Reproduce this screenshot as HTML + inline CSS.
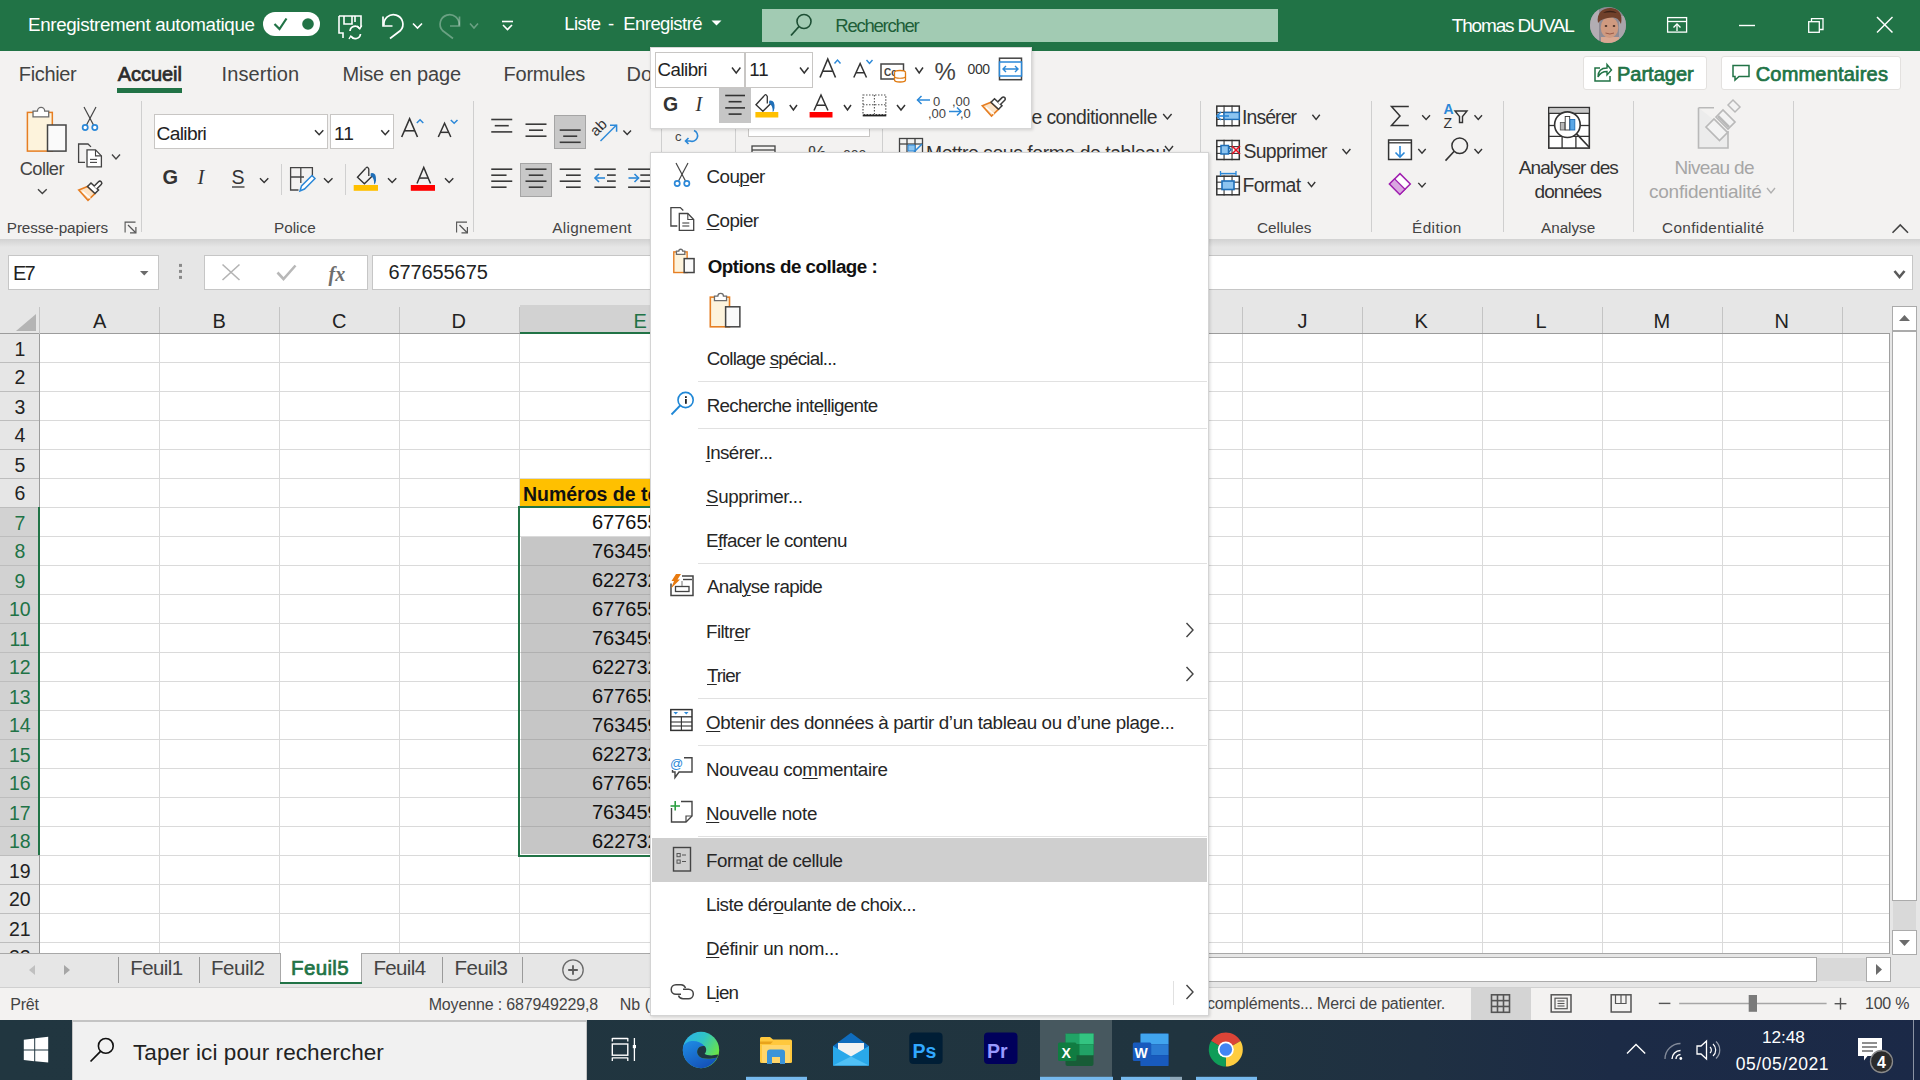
<!DOCTYPE html>
<html><head><meta charset="utf-8">
<style>
*{margin:0;padding:0;box-sizing:border-box}
html,body{width:1920px;height:1080px;overflow:hidden;background:#fff;font-family:"Liberation Sans",sans-serif;color:#222}
.a{position:absolute}
.t{position:absolute;white-space:nowrap;line-height:1}
.t u{text-decoration:underline;text-decoration-thickness:1px;text-underline-offset:2px}
svg{position:absolute;overflow:visible}
</style></head><body>

<!-- TITLE BAR -->
<div class="a" style="left:0;top:0;width:1920px;height:51px;background:#217346"></div>
<div class="a" style="left:263px;top:12px;width:57px;height:24px;background:#fff;border-radius:12px"></div>
<svg style="left:263px;top:12px" width="57" height="24"><polyline points="11.5,18 16.5,23 23.5,12.5" transform="translate(0,-6)" fill="none" stroke="#217346" stroke-width="2.2"/><circle cx="45" cy="12" r="5.8" fill="#217346"/></svg>
<div class="a" style="left:762px;top:9px;width:516px;height:33px;background:#a2cbb3"></div>

<!-- RIBBON -->
<div class="a" style="left:0;top:51px;width:1920px;height:188px;background:#f3f2f1"></div>
<div class="a" style="left:0;top:239px;width:1920px;height:8px;background:linear-gradient(#d2d2d2,#e6e6e6)"></div>
<div class="a" style="left:117px;top:88px;width:65px;height:5px;background:#217346"></div>
<div class="a" style="left:1583px;top:56px;width:124px;height:34px;background:#fff;border:1px solid #e3e1df;border-radius:3px"></div>
<div class="a" style="left:1721px;top:56px;width:180px;height:34px;background:#fff;border:1px solid #e3e1df;border-radius:3px"></div>
<!-- separators -->
<div class="a" style="left:141px;top:101px;width:1px;height:131px;background:#cfcfcf"></div>
<div class="a" style="left:473px;top:101px;width:1px;height:131px;background:#cfcfcf"></div>
<div class="a" style="left:661px;top:101px;width:1px;height:131px;background:#cfcfcf"></div>
<div class="a" style="left:735px;top:101px;width:1px;height:131px;background:#cfcfcf"></div>
<div class="a" style="left:882px;top:101px;width:1px;height:131px;background:#cfcfcf"></div>
<div class="a" style="left:1200px;top:101px;width:1px;height:131px;background:#cfcfcf"></div>
<div class="a" style="left:1371px;top:101px;width:1px;height:131px;background:#cfcfcf"></div>
<div class="a" style="left:1503px;top:101px;width:1px;height:131px;background:#cfcfcf"></div>
<div class="a" style="left:1633px;top:101px;width:1px;height:131px;background:#cfcfcf"></div>
<div class="a" style="left:1793px;top:101px;width:1px;height:131px;background:#cfcfcf"></div>
<!-- font boxes -->
<div class="a" style="left:154px;top:114px;width:174px;height:35px;background:#fff;border:1px solid #c8c6c4"></div>
<div class="a" style="left:330px;top:114px;width:64px;height:35px;background:#fff;border:1px solid #c8c6c4"></div>
<div class="a" style="left:748px;top:114px;width:122px;height:23px;background:#fff;border:1px solid #c8c6c4"></div>
<!-- highlighted align buttons -->
<div class="a" style="left:554px;top:115px;width:32px;height:34px;background:#c8c8c8;border:1px solid #a5a5a5"></div>
<div class="a" style="left:520px;top:163px;width:32px;height:34px;background:#c8c8c8;border:1px solid #a5a5a5"></div>
<svg style="left:0;top:0" width="1920" height="1080" viewBox="0 0 1920 1080"><path d="M339,16 H361 V27 M339,16 V33 H343 V38 M344,16 V24 H352 V16 M355,16 V22" fill="none" stroke="#fff" stroke-width="1.6" /><path d="M350,31 A5.2,5.2 0 0 1 359.5,28.5 M360.5,34 A5.2,5.2 0 0 1 351,36.3" fill="none" stroke="#fff" stroke-width="1.7" /><path d="M357,26 L359.8,28.8 L361.8,25.5 M353.5,38.5 L350.8,36 L349,39" fill="none" stroke="#fff" stroke-width="1.4" /><path d="M383,16.5 V26 H392.5" fill="none" stroke="#fff" stroke-width="1.7" /><path d="M384,25.5 A9.5,9.5 0 1 1 400.5,30.5 L390,38.5" fill="none" stroke="#fff" stroke-width="1.7" /><polyline points="413,23.5 417.5,28 422,23.5" fill="none" stroke="#fff" stroke-width="1.6"/><path d="M459.5,16.5 V26 H450" fill="none" stroke="rgba(255,255,255,0.33)" stroke-width="1.7" /><path d="M459,25.5 A9.5,9.5 0 1 0 442.5,30.5 L453,38.5" fill="none" stroke="rgba(255,255,255,0.33)" stroke-width="1.7" /><polyline points="470,23.5 474.0,28 478,23.5" fill="none" stroke="rgba(255,255,255,0.33)" stroke-width="1.6"/><line x1="502" y1="21.5" x2="513" y2="21.5" stroke="#fff" stroke-width="1.6"/><polyline points="503,25 507.5,29.5 512,25" fill="none" stroke="#fff" stroke-width="1.6"/><polygon points="711.5,20.5 721.5,20.5 716.5,25.5" fill="#fff"/><circle cx="804" cy="21.5" r="7" fill="none" stroke="#1d4f34" stroke-width="1.6"/><line x1="799" y1="26.5" x2="791" y2="35.5" stroke="#1d4f34" stroke-width="1.8"/><defs><clipPath id="av"><circle cx="1608" cy="25" r="18"/></clipPath></defs><g clip-path="url(#av)"><rect x="1590" y="7" width="36" height="36" fill="#8f8b94"/><rect x="1590" y="7" width="9" height="36" fill="#b2adb3"/><rect x="1619" y="16" width="7" height="24" fill="#a9a5ab"/><path d="M1601,37 H1619 V43 H1601 Z" fill="#d9a892"/><ellipse cx="1609.5" cy="27.5" rx="8.8" ry="10.5" fill="#cf9a80"/><path d="M1598,23 C1596,12 1604,7.5 1611,8 C1619,8.5 1623,14 1621,24 C1619,19 1616,17 1612,17.5 C1606,18 1601,19 1598,23 Z" fill="#70402a"/><path d="M1603,13 C1607,10 1613,10 1617,13 C1613,12 1608,12 1603,13 Z" fill="#3a2218"/><ellipse cx="1606" cy="26" rx="1.3" ry="0.9" fill="#4a3228"/><ellipse cx="1614" cy="26" rx="1.3" ry="0.9" fill="#4a3228"/><path d="M1605.5,33 Q1610,35 1614,33" stroke="#9a5a48" stroke-width="1" fill="none"/></g><rect x="1667.6" y="17.6" width="19" height="14.5" fill="none" stroke="#fff" stroke-width="1.3" /><line x1="1667.6" y1="21.5" x2="1686.6" y2="21.5" stroke="#fff" stroke-width="1.3"/><line x1="1677" y1="31" x2="1677" y2="24" stroke="#fff" stroke-width="1.3"/><polyline points="1673.5,27.5 1677.0,24 1680.5,27.5" fill="none" stroke="#fff" stroke-width="1.3"/><line x1="1739" y1="25.5" x2="1755" y2="25.5" stroke="#fff" stroke-width="1.4"/><rect x="1808.7" y="21.7" width="10.6" height="10.6" fill="none" stroke="#fff" stroke-width="1.3" /><path d="M1811.5,21.5 V18.6 H1823 V29.5 H1819.5" fill="none" stroke="#fff" stroke-width="1.3" /><line x1="1877" y1="17" x2="1892.5" y2="32.5" stroke="#fff" stroke-width="1.5"/><line x1="1892.5" y1="17" x2="1877" y2="32.5" stroke="#fff" stroke-width="1.5"/><path d="M1600,68 H1595 V81 H1610 V76" fill="none" stroke="#217346" stroke-width="1.5" /><path d="M1598,77 C1598,70 1602,68 1607,68 V64.5 L1611.5,70 L1607,75 V71.5 C1603,71.5 1600,73 1598,77 Z" fill="none" stroke="#217346" stroke-width="1.4" /><path d="M1733,65.5 H1749 V76.5 H1739 L1735,80 V76.5 H1733 Z" fill="none" stroke="#217346" stroke-width="1.5" /></svg>
<svg style="left:0;top:0" width="1920" height="1080" viewBox="0 0 1920 1080"><rect x="27.400000000000002" y="112.4" width="24.924000000000003" height="38.7" fill="#fdf3dc" stroke="#e67e22" stroke-width="1.5" /><path d="M33.032000000000004,116.9 V111.05 H37.454 A3.6180000000000003,3.6180000000000003 0 0 1 44.690000000000005,111.05 H48.71000000000001 V116.9 Z" fill="#fff" stroke="#6b6b6b" stroke-width="1.3" /><rect x="47.504000000000005" y="125.0" width="18.492" height="26.099999999999998" fill="#fafafa" stroke="#444" stroke-width="1.5" /><polyline points="38,189.3 42.35,193.6 46.7,189.3" fill="none" stroke="#444" stroke-width="1.4"/><line x1="84.0" y1="107" x2="93.5" y2="125.0" stroke="#444" stroke-width="1.2"/><line x1="96.0" y1="107" x2="86.5" y2="125.0" stroke="#444" stroke-width="1.2"/><circle cx="85.2" cy="127.5" r="2.6" fill="#fff" stroke="#2b88d8" stroke-width="1.7"/><circle cx="94.8" cy="127.5" r="2.6" fill="#fff" stroke="#2b88d8" stroke-width="1.7"/><path d="M85.0,162.4 H78.6 V144.0 H88.0 L91.0,146.9" fill="none" stroke="#444" stroke-width="1.3" /><path d="M87.0,149.9 H95.5 L101.4,155.9 V166.8 H87.0 Z" fill="#fff" stroke="#444" stroke-width="1.3" /><path d="M95.5,149.9 V155.9 H101.4" fill="none" stroke="#444" stroke-width="1.1" /><line x1="90.0" y1="159.4" x2="97.0" y2="159.4" stroke="#444" stroke-width="1.1"/><line x1="90.0" y1="162.4" x2="97.0" y2="162.4" stroke="#444" stroke-width="1.1"/><polyline points="112,154.5 116.0,159 120,154.5" fill="none" stroke="#444" stroke-width="1.4"/><path d="M78.8,190.0 L88.0,200.3 L95.0,193.5 L87.5,186.5 Z" fill="#fce3c6" stroke="#e67e22" stroke-width="1.7" /><line x1="82.5" y1="191.5" x2="90.5" y2="198.5" stroke="#fff" stroke-width="1.2"/><path d="M87.5,186.5 L91.0,183.0 L98.5,190.0 L95.0,193.5 Z" fill="#fff" stroke="#3c3c3c" stroke-width="1.5" /><path d="M94.0,186.3 L98.5,181.8 A1.9,1.9 0 0 1 101.2,184.5 L96.7,189.0" fill="#fff" stroke="#3c3c3c" stroke-width="1.5" /><path d="M125.1,232.5 V222.1 H135.5" fill="none" stroke="#555" stroke-width="1.1" /><line x1="128.0" y1="225.0" x2="135.5" y2="232.5" stroke="#555" stroke-width="1.2"/><path d="M130.0,232.9 H135.9 V227.0" fill="none" stroke="#555" stroke-width="1.2" /><polyline points="315,130.2 319.15,134.7 323.3,130.2" fill="none" stroke="#333" stroke-width="1.5"/><polyline points="381.3,130.2 385.25,134.7 389.2,130.2" fill="none" stroke="#333" stroke-width="1.5"/><path d="M401.7,137 L409.6,118.7 L417.5,137" fill="none" stroke="#333" stroke-width="1.6" stroke-linejoin="miter"/><line x1="404.386" y1="130.778" x2="414.814" y2="130.778" stroke="#333" stroke-width="1.6"/><polyline points="416.8,123 420.05,119.8 423.3,123" fill="none" stroke="#2b88d8" stroke-width="1.5"/><path d="M438.3,137 L444.55,123.3 L450.8,137" fill="none" stroke="#333" stroke-width="1.5" stroke-linejoin="miter"/><line x1="440.425" y1="132.34199999999998" x2="448.675" y2="132.34199999999998" stroke="#333" stroke-width="1.5"/><polyline points="450.8,120 454.15,123.3 457.5,120" fill="none" stroke="#2b88d8" stroke-width="1.5"/><text x="162.5" y="184.3" font-family="Liberation Sans" font-size="20" fill="#333" font-weight="bold" font-style="normal" text-anchor="start">G</text><text x="197.5" y="184.3" font-family="Liberation Serif" font-size="20.5" fill="#333" font-weight="normal" font-style="italic" text-anchor="start">I</text><text x="231.5" y="184.3" font-family="Liberation Sans" font-size="19.5" fill="#333" font-weight="normal" font-style="normal" text-anchor="start">S</text><line x1="232" y1="187" x2="244.5" y2="187" stroke="#333" stroke-width="1.3"/><polyline points="260,178.3 264.15,182.5 268.3,178.3" fill="none" stroke="#333" stroke-width="1.4"/><line x1="281.5" y1="164" x2="281.5" y2="195" stroke="#d0d0d0" stroke-width="1"/><path d="M298.5,190 H290.6 V167.6 H312.4 V176.5 M290.6,177 H304 M300.8,167.6 V183" fill="none" stroke="#444" stroke-width="1.3" /><path d="M300,191 L301.5,186 L312,175.5 L315,178.5 L304.5,189 Z" fill="#fff" stroke="#2b88d8" stroke-width="1.5" /><polyline points="324,178.3 328.25,182.5 332.5,178.3" fill="none" stroke="#333" stroke-width="1.4"/><line x1="345.5" y1="164" x2="345.5" y2="195" stroke="#d0d0d0" stroke-width="1"/><path d="M365.5,168.5 L357.5,177.3 L364.4,183.8 L372.8,175.5" fill="none" stroke="#333" stroke-width="1.4" /><path d="M365.5,168.5 Q367.3,165.5 368.8,169 V176" fill="none" stroke="#333" stroke-width="1.3" /><path d="M370.8,173.2 Q376.5,172 376,180.5 Q375.5,184 374.2,184.5 Q374.5,178 370.5,175.8 Z" fill="#1f6fb8" stroke="none" stroke-width="0" /><rect x="353.7" y="185" width="24.3" height="5.8" fill="#ffc000" stroke="none" stroke-width="0" /><polyline points="388,178.3 392.15,182.5 396.3,178.3" fill="none" stroke="#333" stroke-width="1.4"/><path d="M417,183.5 L423.75,167.5 L430.5,183.5" fill="none" stroke="#333" stroke-width="1.5" stroke-linejoin="miter"/><line x1="419.295" y1="178.06" x2="428.205" y2="178.06" stroke="#333" stroke-width="1.5"/><rect x="410.8" y="185" width="24.2" height="5.8" fill="#ff0000" stroke="none" stroke-width="0" /><polyline points="445,178.3 449.15,182.5 453.3,178.3" fill="none" stroke="#333" stroke-width="1.4"/><path d="M456.6,232.5 V222.1 H467" fill="none" stroke="#555" stroke-width="1.1" /><line x1="459.5" y1="225.0" x2="467" y2="232.5" stroke="#555" stroke-width="1.2"/><path d="M461.5,232.9 H467.4 V227.0" fill="none" stroke="#555" stroke-width="1.2" /><line x1="491.25" y1="119.5" x2="512.25" y2="119.5" stroke="#3a3a3a" stroke-width="1.6"/><line x1="494.75" y1="125.7" x2="508.75" y2="125.7" stroke="#3a3a3a" stroke-width="1.6"/><line x1="491.25" y1="131.9" x2="512.25" y2="131.9" stroke="#3a3a3a" stroke-width="1.6"/><line x1="525.5" y1="124.2" x2="546.5" y2="124.2" stroke="#3a3a3a" stroke-width="1.6"/><line x1="529.0" y1="130.2" x2="543.0" y2="130.2" stroke="#3a3a3a" stroke-width="1.6"/><line x1="525.5" y1="136.2" x2="546.5" y2="136.2" stroke="#3a3a3a" stroke-width="1.6"/><line x1="559.7" y1="130.1" x2="580.7" y2="130.1" stroke="#3a3a3a" stroke-width="1.6"/><line x1="563.2" y1="136.2" x2="577.2" y2="136.2" stroke="#3a3a3a" stroke-width="1.6"/><line x1="559.7" y1="142.29999999999998" x2="580.7" y2="142.29999999999998" stroke="#3a3a3a" stroke-width="1.6"/><text x="0" y="0" font-family="Liberation Sans" font-size="15" fill="#333" transform="translate(596,137) rotate(-45)">ab</text><line x1="600.5" y1="141" x2="616.5" y2="125" stroke="#2b88d8" stroke-width="1.5"/><path d="M610,125.2 H616.6 V131.8" fill="none" stroke="#2b88d8" stroke-width="1.5" /><polyline points="623.4,130.5 627.2,134.5 631,130.5" fill="none" stroke="#333" stroke-width="1.4"/><line x1="491.25" y1="169.2" x2="512.25" y2="169.2" stroke="#3a3a3a" stroke-width="1.6"/><line x1="491.25" y1="175.2" x2="506.55" y2="175.2" stroke="#3a3a3a" stroke-width="1.6"/><line x1="491.25" y1="181.2" x2="512.25" y2="181.2" stroke="#3a3a3a" stroke-width="1.6"/><line x1="491.25" y1="187.2" x2="506.55" y2="187.2" stroke="#3a3a3a" stroke-width="1.6"/><line x1="525.5" y1="169.2" x2="546.5" y2="169.2" stroke="#3a3a3a" stroke-width="1.6"/><line x1="528.75" y1="175.2" x2="543.25" y2="175.2" stroke="#3a3a3a" stroke-width="1.6"/><line x1="525.5" y1="181.2" x2="546.5" y2="181.2" stroke="#3a3a3a" stroke-width="1.6"/><line x1="528.75" y1="187.2" x2="543.25" y2="187.2" stroke="#3a3a3a" stroke-width="1.6"/><line x1="559.7" y1="169.2" x2="580.7" y2="169.2" stroke="#3a3a3a" stroke-width="1.6"/><line x1="566.0" y1="175.2" x2="580.7" y2="175.2" stroke="#3a3a3a" stroke-width="1.6"/><line x1="559.7" y1="181.2" x2="580.7" y2="181.2" stroke="#3a3a3a" stroke-width="1.6"/><line x1="566.0" y1="187.2" x2="580.7" y2="187.2" stroke="#3a3a3a" stroke-width="1.6"/><line x1="594.4" y1="169.2" x2="615.75" y2="169.2" stroke="#3a3a3a" stroke-width="1.6"/><line x1="607" y1="175.1" x2="615.75" y2="175.1" stroke="#3a3a3a" stroke-width="1.6"/><line x1="607" y1="181.1" x2="615.75" y2="181.1" stroke="#3a3a3a" stroke-width="1.6"/><line x1="594.4" y1="187.2" x2="615.75" y2="187.2" stroke="#3a3a3a" stroke-width="1.6"/><line x1="595" y1="178" x2="605" y2="178" stroke="#2b88d8" stroke-width="1.6"/><path d="M599,174 L595,178 L599,182" fill="none" stroke="#2b88d8" stroke-width="1.6" /><line x1="628.1" y1="169.2" x2="651" y2="169.2" stroke="#3a3a3a" stroke-width="1.6"/><line x1="640.3" y1="175.1" x2="651" y2="175.1" stroke="#3a3a3a" stroke-width="1.6"/><line x1="640.3" y1="181.1" x2="651" y2="181.1" stroke="#3a3a3a" stroke-width="1.6"/><line x1="628.1" y1="187.2" x2="651" y2="187.2" stroke="#3a3a3a" stroke-width="1.6"/><line x1="628.5" y1="178" x2="638.5" y2="178" stroke="#2b88d8" stroke-width="1.6"/><path d="M634.5,174 L638.5,178 L634.5,182" fill="none" stroke="#2b88d8" stroke-width="1.6" /><text x="675" y="128.5" font-family="Liberation Sans" font-size="12" fill="#444" font-weight="normal" font-style="normal" text-anchor="start">ab</text><text x="675" y="140.5" font-family="Liberation Sans" font-size="13" fill="#444" font-weight="normal" font-style="normal" text-anchor="start">c</text><path d="M694,130.5 A5.5,5.5 0 0 1 690,141 H685.5 M688.5,138 L685.5,141 L688.5,144" fill="none" stroke="#2b88d8" stroke-width="1.6" /><rect x="752" y="146" width="23" height="10" fill="none" stroke="#444" stroke-width="1.3" /><line x1="752" y1="150" x2="775" y2="150" stroke="#444" stroke-width="1.3"/><text x="808" y="160" font-family="Liberation Sans" font-size="21" fill="#444" font-weight="normal" font-style="normal" text-anchor="start">%</text><text x="843" y="160" font-family="Liberation Sans" font-size="14" fill="#444" font-weight="normal" font-style="normal" text-anchor="start">000</text><polyline points="1163.2,114 1167.4,119 1171.6,114" fill="none" stroke="#333" stroke-width="1.4"/><rect x="899.5" y="138.5" width="23" height="16" fill="none" stroke="#444" stroke-width="1.3" /><line x1="899.5" y1="144" x2="922.5" y2="144" stroke="#444" stroke-width="1.3"/><line x1="907" y1="138.5" x2="907" y2="155" stroke="#444" stroke-width="1.3"/><line x1="915" y1="138.5" x2="915" y2="155" stroke="#444" stroke-width="1.3"/><path d="M908,145 h7 v6 h-7z" fill="#8cc4f0" stroke="#2b88d8" stroke-width="1" /><path d="M914,152 L922,144" fill="none" stroke="#2b88d8" stroke-width="1.6" /><polyline points="1165,146 1169.0,151 1173,146" fill="none" stroke="#333" stroke-width="1.4"/><rect x="1216.8" y="106.10000000000001" width="22.5" height="19.6" fill="#fff" stroke="#333" stroke-width="1.5" /><line x1="1224.0666666666666" y1="105.4" x2="1224.0666666666666" y2="126.4" stroke="#333" stroke-width="1.1"/><line x1="1216.1" y1="112.4" x2="1240.0" y2="112.4" stroke="#333" stroke-width="1.1"/><line x1="1232.0333333333333" y1="105.4" x2="1232.0333333333333" y2="126.4" stroke="#333" stroke-width="1.1"/><line x1="1216.1" y1="119.4" x2="1240.0" y2="119.4" stroke="#333" stroke-width="1.1"/><rect x="1224" y="112.4" width="15.3" height="7" fill="#8cc4f0" stroke="#1f6fb8" stroke-width="1.4" /><line x1="1217" y1="116" x2="1229" y2="116" stroke="#2b88d8" stroke-width="1.6"/><path d="M1221,112 L1217,116 L1221,120" fill="none" stroke="#2b88d8" stroke-width="1.6" /><polyline points="1312.4,114.8 1316.1,119.4 1319.8,114.8" fill="none" stroke="#333" stroke-width="1.4"/><rect x="1216.8" y="140.5" width="22.5" height="19.0" fill="#fff" stroke="#333" stroke-width="1.5" /><line x1="1224.0666666666666" y1="139.8" x2="1224.0666666666666" y2="160.20000000000002" stroke="#333" stroke-width="1.1"/><line x1="1216.1" y1="146.60000000000002" x2="1240.0" y2="146.60000000000002" stroke="#333" stroke-width="1.1"/><line x1="1232.0333333333333" y1="139.8" x2="1232.0333333333333" y2="160.20000000000002" stroke="#333" stroke-width="1.1"/><line x1="1216.1" y1="153.4" x2="1240.0" y2="153.4" stroke="#333" stroke-width="1.1"/><rect x="1221" y="145.5" width="7.5" height="8.5" fill="#8cc4f0" stroke="#1f6fb8" stroke-width="1.5" /><path d="M1228.5,147 L1231,149.7 L1228.5,152.5" fill="none" stroke="#1f6fb8" stroke-width="1.4" /><line x1="1232" y1="146" x2="1240" y2="154" stroke="#e81123" stroke-width="1.6"/><line x1="1240" y1="146" x2="1232" y2="154" stroke="#e81123" stroke-width="1.6"/><polyline points="1342.5,149 1346.45,153.7 1350.4,149" fill="none" stroke="#333" stroke-width="1.4"/><rect x="1216.8" y="176.2" width="22.5" height="18.6" fill="#fff" stroke="#333" stroke-width="1.5" /><line x1="1224.0666666666666" y1="175.5" x2="1224.0666666666666" y2="195.5" stroke="#333" stroke-width="1.1"/><line x1="1216.1" y1="182.16666666666666" x2="1240.0" y2="182.16666666666666" stroke="#333" stroke-width="1.1"/><line x1="1232.0333333333333" y1="175.5" x2="1232.0333333333333" y2="195.5" stroke="#333" stroke-width="1.1"/><line x1="1216.1" y1="188.83333333333334" x2="1240.0" y2="188.83333333333334" stroke="#333" stroke-width="1.1"/><rect x="1222" y="181" width="12" height="8.5" fill="#8cc4f0" stroke="#1f6fb8" stroke-width="1.6" /><line x1="1220.5" y1="173.6" x2="1236" y2="173.6" stroke="#2b88d8" stroke-width="1.5"/><line x1="1220.5" y1="171" x2="1220.5" y2="176" stroke="#2b88d8" stroke-width="1.3"/><line x1="1236" y1="171" x2="1236" y2="176" stroke="#2b88d8" stroke-width="1.3"/><polyline points="1307.8,182 1311.5,186.6 1315.2,182" fill="none" stroke="#333" stroke-width="1.4"/><path d="M1408.8,106.5 H1391.5 L1400,116 L1391.5,125.5 H1408.8" fill="none" stroke="#333" stroke-width="1.5" /><polyline points="1422.2,115.3 1426.1,119.4 1430,115.3" fill="none" stroke="#333" stroke-width="1.4"/><text x="1443.6" y="114.4" font-family="Liberation Sans" font-size="14" fill="#2b88d8" font-weight="bold" font-style="normal" text-anchor="start">A</text><text x="1443.6" y="127.8" font-family="Liberation Sans" font-size="14" fill="#333" font-weight="normal" font-style="normal" text-anchor="start">Z</text><path d="M1455,111 H1467 L1462.5,116.5 V122.5 H1459.5 V116.5 Z" fill="none" stroke="#333" stroke-width="1.4" /><polyline points="1474.5,115.3 1478.25,119.4 1482,115.3" fill="none" stroke="#333" stroke-width="1.4"/><rect x="1388.6" y="140" width="22.8" height="19.5" fill="#fff" stroke="#333" stroke-width="1.5" /><line x1="1388.6" y1="142.8" x2="1411.4" y2="142.8" stroke="#333" stroke-width="1.3"/><line x1="1400" y1="146" x2="1400" y2="157" stroke="#2b88d8" stroke-width="1.6"/><path d="M1395.5,152.5 L1400,157 L1404.5,152.5" fill="none" stroke="#2b88d8" stroke-width="1.6" /><polyline points="1418.3,149 1422.0,153.2 1425.7,149" fill="none" stroke="#333" stroke-width="1.4"/><circle cx="1459.7" cy="145.8" r="7.8" fill="none" stroke="#333" stroke-width="1.5"/><line x1="1454.2" y1="151.3" x2="1445.5" y2="160.6" stroke="#333" stroke-width="1.6"/><polyline points="1474.5,149 1478.25,153.2 1482,149" fill="none" stroke="#333" stroke-width="1.4"/><path d="M1389.5,184 L1400,173.6 L1410.3,184 L1399.8,194.4 Z" fill="#fff" stroke="#a020b0" stroke-width="1.5" /><path d="M1389.5,184 L1394.6,178.9 L1405,189.3 L1399.8,194.4 Z" fill="#d9a6e0" stroke="#a020b0" stroke-width="1.3" /><polyline points="1418.3,182.9 1422.0,187 1425.7,182.9" fill="none" stroke="#333" stroke-width="1.4"/><rect x="1548.8" y="107.6" width="40.5" height="40.5" fill="#fff" stroke="#333" stroke-width="1.6" /><rect x="1549.5" y="108.3" width="39" height="5" fill="#c8c8c8" stroke="none" stroke-width="0" /><line x1="1548.8" y1="113.3" x2="1589.3" y2="113.3" stroke="#333" stroke-width="1.3"/><line x1="1548.8" y1="125.5" x2="1555" y2="125.5" stroke="#333" stroke-width="1.3"/><line x1="1580" y1="125.5" x2="1589.3" y2="125.5" stroke="#333" stroke-width="1.3"/><line x1="1548.8" y1="136.3" x2="1589.3" y2="136.3" stroke="#333" stroke-width="1.3"/><line x1="1562.1" y1="136.3" x2="1562.1" y2="148" stroke="#333" stroke-width="1.3"/><line x1="1575.9" y1="136.3" x2="1575.9" y2="148" stroke="#333" stroke-width="1.3"/><circle cx="1567.4" cy="124.7" r="12.8" fill="#fff" stroke="#333" stroke-width="1.6"/><line x1="1576.6" y1="133.9" x2="1589" y2="147" stroke="#333" stroke-width="1.7"/><rect x="1560.3" y="122.5" width="4.5" height="7.5" fill="#b8b8b8" stroke="#555" stroke-width="0.8" /><rect x="1565.2" y="116.5" width="4.5" height="13.5" fill="#fff" stroke="#333" stroke-width="0.9" /><rect x="1570" y="119.5" width="4.8" height="10.5" fill="#5aa7e6" stroke="#1f6fb8" stroke-width="0.9" /><path d="M1698.5,107.7 H1714 M1728,131 V148 H1698.5 V107.7" fill="#ececec" stroke="#b9b9b9" stroke-width="1.6" /><path d="M1706,127 L1714,119 L1727.5,132.5 L1719.5,140.5 Z" fill="#f3f3f3" stroke="#b9b9b9" stroke-width="1.7" /><path d="M1716,117 L1723,110 L1735,122 L1728,129 Z" fill="#f3f3f3" stroke="#b9b9b9" stroke-width="1.7" /><path d="M1728,105 L1733,100 L1740,107 L1735,112 Z" fill="#f3f3f3" stroke="#b9b9b9" stroke-width="1.5" /><line x1="1718" y1="116" x2="1729" y2="127" stroke="#b9b9b9" stroke-width="2.5"/><polyline points="1767,188 1771.0,193 1775,188" fill="none" stroke="#b0b0b0" stroke-width="1.4"/><polyline points="1892.5,232.8 1900.25,225 1908,232.8" fill="none" stroke="#444" stroke-width="1.6"/></svg>

<!-- FORMULA BAR AREA -->
<div class="a" style="left:0;top:247px;width:1920px;height:58px;background:#e6e6e6"></div>
<div class="a" style="left:1890px;top:305px;width:30px;height:682px;background:#e6e6e6"></div>
<div class="a" style="left:8px;top:255px;width:151px;height:35px;background:#fff;border:1px solid #c6c6c6"></div>
<div class="a" style="left:204px;top:255px;width:164px;height:35px;background:#fff;border:1px solid #c6c6c6"></div>
<div class="a" style="left:372px;top:255px;width:1541px;height:35px;background:#fff;border:1px solid #c6c6c6"></div>
<svg style="left:0;top:0" width="1920" height="1080" viewBox="0 0 1920 1080"><polygon points="140,271 148.5,271 144.25,275.5" fill="#6b6b6b"/><rect x="179" y="263.9" width="3" height="3" fill="#8a8a8a" stroke="none" stroke-width="0" /><rect x="179" y="269.9" width="3" height="3" fill="#8a8a8a" stroke="none" stroke-width="0" /><rect x="179" y="275.9" width="3" height="3" fill="#8a8a8a" stroke="none" stroke-width="0" /><line x1="222.5" y1="264.5" x2="239.5" y2="280" stroke="#b3b3b3" stroke-width="1.6"/><line x1="239.5" y1="264.5" x2="222.5" y2="280" stroke="#b3b3b3" stroke-width="1.6"/><path d="M277.5,272.5 L283.5,279 L295.5,265.5" fill="none" stroke="#b8b8b8" stroke-width="2.6" /><text x="328.5" y="281" font-family="Liberation Serif" font-size="20" fill="#6e6e6e" font-weight="bold" font-style="italic" text-anchor="start">fx</text><polyline points="1894.5,271 1899.5,277 1904.5,271" fill="none" stroke="#5a5a5a" stroke-width="2.6"/></svg>

<!-- GRID -->
<div class="a" style="left:0;top:305px;width:1890px;height:29px;background:#e6e6e6"></div>
<div class="a" style="left:0;top:334px;width:39px;height:619px;background:#e6e6e6"></div>
<div class="a" style="left:520px;top:305px;width:242px;height:29px;background:#d2d2d2"></div>
<div class="a" style="left:520px;top:332px;width:242px;height:2px;background:#217346"></div>
<div class="a" style="left:0;top:333px;width:520px;height:1px;background:#9c9c9c"></div>
<div class="a" style="left:762px;top:333px;width:1128px;height:1px;background:#9c9c9c"></div>
<svg style="left:0;top:305px" width="40" height="29"><polygon points="36,9 36,26 16,26" fill="#b4b4b4"/></svg>
<div class="a" style="left:0;top:507px;width:38px;height:348px;background:#d2d2d2"></div>
<div class="a" style="left:40px;top:334px;width:1849px;height:619px;background:#fff"></div>
<div class="a" style="left:0;top:362px;width:40px;height:1px;background:#bdbdbd"></div>
<div class="a" style="left:40px;top:362px;width:1849px;height:1px;background:#dadada"></div>
<div class="a" style="left:0;top:391px;width:40px;height:1px;background:#bdbdbd"></div>
<div class="a" style="left:40px;top:391px;width:1849px;height:1px;background:#dadada"></div>
<div class="a" style="left:0;top:420px;width:40px;height:1px;background:#bdbdbd"></div>
<div class="a" style="left:40px;top:420px;width:1849px;height:1px;background:#dadada"></div>
<div class="a" style="left:0;top:449px;width:40px;height:1px;background:#bdbdbd"></div>
<div class="a" style="left:40px;top:449px;width:1849px;height:1px;background:#dadada"></div>
<div class="a" style="left:0;top:478px;width:40px;height:1px;background:#bdbdbd"></div>
<div class="a" style="left:40px;top:478px;width:1849px;height:1px;background:#dadada"></div>
<div class="a" style="left:0;top:507px;width:40px;height:1px;background:#bdbdbd"></div>
<div class="a" style="left:40px;top:507px;width:1849px;height:1px;background:#dadada"></div>
<div class="a" style="left:0;top:536px;width:40px;height:1px;background:#bdbdbd"></div>
<div class="a" style="left:40px;top:536px;width:1849px;height:1px;background:#dadada"></div>
<div class="a" style="left:0;top:565px;width:40px;height:1px;background:#bdbdbd"></div>
<div class="a" style="left:40px;top:565px;width:1849px;height:1px;background:#dadada"></div>
<div class="a" style="left:0;top:594px;width:40px;height:1px;background:#bdbdbd"></div>
<div class="a" style="left:40px;top:594px;width:1849px;height:1px;background:#dadada"></div>
<div class="a" style="left:0;top:623px;width:40px;height:1px;background:#bdbdbd"></div>
<div class="a" style="left:40px;top:623px;width:1849px;height:1px;background:#dadada"></div>
<div class="a" style="left:0;top:652px;width:40px;height:1px;background:#bdbdbd"></div>
<div class="a" style="left:40px;top:652px;width:1849px;height:1px;background:#dadada"></div>
<div class="a" style="left:0;top:681px;width:40px;height:1px;background:#bdbdbd"></div>
<div class="a" style="left:40px;top:681px;width:1849px;height:1px;background:#dadada"></div>
<div class="a" style="left:0;top:710px;width:40px;height:1px;background:#bdbdbd"></div>
<div class="a" style="left:40px;top:710px;width:1849px;height:1px;background:#dadada"></div>
<div class="a" style="left:0;top:739px;width:40px;height:1px;background:#bdbdbd"></div>
<div class="a" style="left:40px;top:739px;width:1849px;height:1px;background:#dadada"></div>
<div class="a" style="left:0;top:768px;width:40px;height:1px;background:#bdbdbd"></div>
<div class="a" style="left:40px;top:768px;width:1849px;height:1px;background:#dadada"></div>
<div class="a" style="left:0;top:797px;width:40px;height:1px;background:#bdbdbd"></div>
<div class="a" style="left:40px;top:797px;width:1849px;height:1px;background:#dadada"></div>
<div class="a" style="left:0;top:826px;width:40px;height:1px;background:#bdbdbd"></div>
<div class="a" style="left:40px;top:826px;width:1849px;height:1px;background:#dadada"></div>
<div class="a" style="left:0;top:855px;width:40px;height:1px;background:#bdbdbd"></div>
<div class="a" style="left:40px;top:855px;width:1849px;height:1px;background:#dadada"></div>
<div class="a" style="left:0;top:884px;width:40px;height:1px;background:#bdbdbd"></div>
<div class="a" style="left:40px;top:884px;width:1849px;height:1px;background:#dadada"></div>
<div class="a" style="left:0;top:913px;width:40px;height:1px;background:#bdbdbd"></div>
<div class="a" style="left:40px;top:913px;width:1849px;height:1px;background:#dadada"></div>
<div class="a" style="left:0;top:942px;width:40px;height:1px;background:#bdbdbd"></div>
<div class="a" style="left:40px;top:942px;width:1849px;height:1px;background:#dadada"></div>
<div class="a" style="left:159px;top:307px;width:1px;height:26px;background:#c4c4c4"></div>
<div class="a" style="left:159px;top:334px;width:1px;height:619px;background:#dadada"></div>
<div class="a" style="left:279px;top:307px;width:1px;height:26px;background:#c4c4c4"></div>
<div class="a" style="left:279px;top:334px;width:1px;height:619px;background:#dadada"></div>
<div class="a" style="left:399px;top:307px;width:1px;height:26px;background:#c4c4c4"></div>
<div class="a" style="left:399px;top:334px;width:1px;height:619px;background:#dadada"></div>
<div class="a" style="left:519px;top:307px;width:1px;height:26px;background:#c4c4c4"></div>
<div class="a" style="left:519px;top:334px;width:1px;height:619px;background:#dadada"></div>
<div class="a" style="left:762px;top:307px;width:1px;height:26px;background:#c4c4c4"></div>
<div class="a" style="left:762px;top:334px;width:1px;height:619px;background:#dadada"></div>
<div class="a" style="left:882px;top:307px;width:1px;height:26px;background:#c4c4c4"></div>
<div class="a" style="left:882px;top:334px;width:1px;height:619px;background:#dadada"></div>
<div class="a" style="left:1002px;top:307px;width:1px;height:26px;background:#c4c4c4"></div>
<div class="a" style="left:1002px;top:334px;width:1px;height:619px;background:#dadada"></div>
<div class="a" style="left:1122px;top:307px;width:1px;height:26px;background:#c4c4c4"></div>
<div class="a" style="left:1122px;top:334px;width:1px;height:619px;background:#dadada"></div>
<div class="a" style="left:1242px;top:307px;width:1px;height:26px;background:#c4c4c4"></div>
<div class="a" style="left:1242px;top:334px;width:1px;height:619px;background:#dadada"></div>
<div class="a" style="left:1362px;top:307px;width:1px;height:26px;background:#c4c4c4"></div>
<div class="a" style="left:1362px;top:334px;width:1px;height:619px;background:#dadada"></div>
<div class="a" style="left:1482px;top:307px;width:1px;height:26px;background:#c4c4c4"></div>
<div class="a" style="left:1482px;top:334px;width:1px;height:619px;background:#dadada"></div>
<div class="a" style="left:1602px;top:307px;width:1px;height:26px;background:#c4c4c4"></div>
<div class="a" style="left:1602px;top:334px;width:1px;height:619px;background:#dadada"></div>
<div class="a" style="left:1722px;top:307px;width:1px;height:26px;background:#c4c4c4"></div>
<div class="a" style="left:1722px;top:334px;width:1px;height:619px;background:#dadada"></div>
<div class="a" style="left:1842px;top:307px;width:1px;height:26px;background:#c4c4c4"></div>
<div class="a" style="left:1842px;top:334px;width:1px;height:619px;background:#dadada"></div>
<div class="a" style="left:39px;top:334px;width:1px;height:619px;background:#9c9c9c"></div>
<div class="a" style="left:39px;top:307px;width:1px;height:27px;background:#c4c4c4"></div>
<div class="a" style="left:1889px;top:334px;width:1px;height:620px;background:#a0a0a0"></div>
<div class="a" style="left:520px;top:479px;width:242px;height:28px;background:#ffc000"></div>
<div class="a" style="left:521px;top:537px;width:241px;height:317px;background:#c6c6c6"></div>
<div class="a" style="left:521px;top:565px;width:241px;height:1px;background:#b0b0b0"></div>
<div class="a" style="left:521px;top:594px;width:241px;height:1px;background:#b0b0b0"></div>
<div class="a" style="left:521px;top:623px;width:241px;height:1px;background:#b0b0b0"></div>
<div class="a" style="left:521px;top:652px;width:241px;height:1px;background:#b0b0b0"></div>
<div class="a" style="left:521px;top:681px;width:241px;height:1px;background:#b0b0b0"></div>
<div class="a" style="left:521px;top:710px;width:241px;height:1px;background:#b0b0b0"></div>
<div class="a" style="left:521px;top:739px;width:241px;height:1px;background:#b0b0b0"></div>
<div class="a" style="left:521px;top:768px;width:241px;height:1px;background:#b0b0b0"></div>
<div class="a" style="left:521px;top:797px;width:241px;height:1px;background:#b0b0b0"></div>
<div class="a" style="left:521px;top:826px;width:241px;height:1px;background:#b0b0b0"></div>
<div class="a" style="left:518px;top:506px;width:250px;height:2px;background:#217346"></div>
<div class="a" style="left:518px;top:506px;width:2px;height:351px;background:#217346"></div>
<div class="a" style="left:518px;top:855px;width:250px;height:2px;background:#217346"></div>
<div class="a" style="left:38px;top:507px;width:2px;height:348px;background:#217346"></div>
<div class="a" style="left:0;top:943px;width:39px;height:10px;overflow:hidden"><div class="t" style="left:9px;top:4.9px;font-size:19.5px;color:#222;letter-spacing:0px">22</div></div>

<!-- SCROLLBARS -->
<div class="a" style="left:1892px;top:306px;width:25px;height:25px;background:#fff;border:1px solid #ababab"></div>
<div class="a" style="left:1892px;top:331px;width:25px;height:570px;background:#fff;border:1px solid #ababab"></div>
<div class="a" style="left:1893px;top:901px;width:23px;height:30px;background:#d9d9d9"></div>
<div class="a" style="left:1892px;top:930px;width:25px;height:25px;background:#fff;border:1px solid #ababab"></div>
<svg style="left:1892px;top:306px" width="25" height="25"><polygon points="7,15 18,15 12.5,9" fill="#6b6b6b"/></svg>
<svg style="left:1892px;top:930px" width="25" height="25"><polygon points="7,10 18,10 12.5,16" fill="#6b6b6b"/></svg>

<!-- SHEET TABS -->
<div class="a" style="left:0;top:953px;width:1890px;height:34px;background:#e6e6e6"></div>
<div class="a" style="left:0;top:953px;width:1890px;height:1px;background:#a8a8a8"></div>
<div class="a" style="left:280px;top:953px;width:82px;height:31px;background:#fff;border-left:1px solid #a8a8a8;border-right:1px solid #a8a8a8"></div>
<div class="a" style="left:280px;top:982px;width:82px;height:2px;background:#217346"></div>
<div class="a" style="left:118px;top:957px;width:1px;height:26px;background:#9a9a9a"></div>
<div class="a" style="left:199px;top:957px;width:1px;height:26px;background:#9a9a9a"></div>
<div class="a" style="left:442px;top:957px;width:1px;height:26px;background:#9a9a9a"></div>
<div class="a" style="left:522px;top:957px;width:1px;height:26px;background:#9a9a9a"></div>
<svg style="left:0;top:953px" width="100" height="34"><polygon points="35,12 35,22 29,17" fill="#c0c0c0"/><polygon points="64,12 64,22 70,17" fill="#a6a6a6"/></svg>
<svg style="left:562px;top:959px" width="22" height="22"><circle cx="11" cy="11" r="10.2" fill="none" stroke="#6a6a6a" stroke-width="1.3"/><path d="M11 6.2V15.8M6.2 11H15.8" stroke="#5a5a5a" stroke-width="1.8"/></svg>
<!-- horizontal scrollbar -->
<div class="a" style="left:660px;top:957px;width:1157px;height:25px;background:#fff;border:1px solid #ababab"></div>
<div class="a" style="left:1817px;top:958px;width:50px;height:23px;background:#d9d9d9"></div>
<div class="a" style="left:1866px;top:957px;width:25px;height:25px;background:#fff;border:1px solid #ababab"></div>
<svg style="left:1866px;top:957px" width="25" height="25"><polygon points="10,7 10,18 16,12.5" fill="#6b6b6b"/></svg>

<!-- STATUS BAR -->
<div class="a" style="left:0;top:987px;width:1920px;height:33px;background:#f3f2f1;border-top:1px solid #d0d0d0"></div>
<div class="a" style="left:1471px;top:988px;width:60px;height:32px;background:#d4d4d4"></div>
<svg style="left:0;top:0" width="1920" height="1080" viewBox="0 0 1920 1080"><rect x="1491.5" y="994.8" width="18" height="17.5" fill="none" stroke="#555" stroke-width="1.6" /><line x1="1497.5" y1="994.8" x2="1497.5" y2="1012.3" stroke="#555" stroke-width="1.6"/><line x1="1491.5" y1="1000.63" x2="1509.5" y2="1000.63" stroke="#555" stroke-width="1.6"/><line x1="1503.5" y1="994.8" x2="1503.5" y2="1012.3" stroke="#555" stroke-width="1.6"/><line x1="1491.5" y1="1006.4599999999999" x2="1509.5" y2="1006.4599999999999" stroke="#555" stroke-width="1.6"/><rect x="1551.2" y="994.8" width="19.8" height="17.2" fill="none" stroke="#555" stroke-width="1.5" /><rect x="1555" y="998.2" width="12.2" height="10.5" fill="none" stroke="#555" stroke-width="1.2" /><line x1="1557.5" y1="1001" x2="1564.5" y2="1001" stroke="#555" stroke-width="1.1"/><line x1="1557.5" y1="1003.5" x2="1564.5" y2="1003.5" stroke="#555" stroke-width="1.1"/><line x1="1557.5" y1="1006" x2="1564.5" y2="1006" stroke="#555" stroke-width="1.1"/><rect x="1611.2" y="994.8" width="19.8" height="17.2" fill="none" stroke="#555" stroke-width="1.5" /><path d="M1615.5,995 V1003.5 H1626 V995 M1621,995 V1003.5" fill="none" stroke="#555" stroke-width="1.2" /><line x1="1658.8" y1="1003.4" x2="1670.4" y2="1003.4" stroke="#555" stroke-width="1.4"/><line x1="1679.2" y1="1003.4" x2="1826.6" y2="1003.4" stroke="#a6a6a6" stroke-width="1.5"/><rect x="1748.7" y="995" width="8.3" height="16.8" fill="#7a7a7a" stroke="none" stroke-width="0" /><line x1="1834.6" y1="1003.7" x2="1846.4" y2="1003.7" stroke="#555" stroke-width="1.4"/><line x1="1840.5" y1="997.8" x2="1840.5" y2="1009.6" stroke="#555" stroke-width="1.4"/></svg>

<!-- TASKBAR -->
<div class="a" style="left:0;top:1020px;width:1920px;height:60px;background:linear-gradient(90deg,#213640 0%,#20343f 62%,#1f3042 74%,#1c2b46 84%,#1b2947 100%)"></div>
<div class="a" style="left:72px;top:1020px;width:515px;height:60px;background:#f1f1f1;border:1px solid #c4c4c4;border-top:2px solid #c4c4c4;border-bottom:none"></div>
<div class="a" style="left:1040px;top:1020px;width:72px;height:60px;background:#47585f"></div>
<svg style="left:0;top:0" width="1920" height="1080" viewBox="0 0 1920 1080"><path d="M23.8,1039.7 L34.2,1038.4 V1049.4 H23.8 Z M35.2,1038.3 L48.2,1036.8 V1049.4 H35.2 Z M23.8,1050.4 H34.2 V1061.2 L23.8,1059.9 Z M35.2,1050.4 H48.2 V1062.6 L35.2,1061.3 Z" fill="#fff" stroke="none" stroke-width="0" /><circle cx="105.8" cy="1045.9" r="7.4" fill="none" stroke="#111" stroke-width="1.6"/><line x1="100.5" y1="1051.3" x2="90.5" y2="1061.5" stroke="#111" stroke-width="1.7"/><path d="M612.3,1041.5 V1038 M612.3,1038.5 H627.8 M627.8,1038 V1041.5" fill="none" stroke="#fff" stroke-width="1.3" /><rect x="612.3" y="1044" width="15.5" height="11.2" fill="none" stroke="#fff" stroke-width="1.4" /><path d="M612.3,1057.5 V1061 M612.3,1057.8 H627.8 M627.8,1057.5 V1061" fill="none" stroke="#fff" stroke-width="1.3" /><line x1="634.4" y1="1038" x2="634.4" y2="1061" stroke="#fff" stroke-width="1.3"/><rect x="632.8" y="1045" width="3.2" height="3.2" fill="#fff" stroke="none" stroke-width="0" /><defs><linearGradient id="edg1" x1="0" y1="0" x2="1" y2="0.6"><stop offset="0" stop-color="#2bb0f0"/><stop offset="0.5" stop-color="#30c3c4"/><stop offset="1" stop-color="#6fe83c"/></linearGradient><linearGradient id="edg2" x1="0" y1="0" x2="0.6" y2="1"><stop offset="0" stop-color="#1f8ee6"/><stop offset="1" stop-color="#1452b8"/></linearGradient></defs><circle cx="701" cy="1050" r="18.2" fill="url(#edg1)"/><path d="M683,1046.5 C686,1040 698,1038.5 704.5,1046 C698.5,1045 695.5,1050.5 698,1055 C700.5,1059 708,1060 717.3,1057.5 C714,1064 707.5,1068.2 701,1068.2 C691,1068.2 682.8,1060 682.8,1050 Z" fill="url(#edg2)"/><path d="M704.5,1046 C698.5,1045 695.5,1050.5 698,1055 C700.5,1059 708,1060 717.3,1057.5 L718.2,1054.6 C712,1056 706.5,1055.5 704.6,1053.8 C706.8,1051.5 706.8,1048 704.5,1046 Z" fill="#1f3541"/><path d="M760,1038.5 Q760,1037 761.5,1037 H770 L773,1039.5 H790.5 Q792,1039.5 792,1041 V1062 Q792,1063 790.5,1063 H761.5 Q760,1063 760,1061.5 Z" fill="#ffc83d" stroke="none" stroke-width="0" /><path d="M760,1041.5 H773 L770.5,1044 H760 Z" fill="#e8a31c" stroke="none" stroke-width="0" /><path d="M762,1045 H790 V1061 Q790,1063 788,1063 H764 Q762,1063 762,1061 Z" fill="#ffd66b" stroke="none" stroke-width="0" /><path d="M767,1064 V1052.5 Q767,1049.5 770,1049.5 H782 Q785,1049.5 785,1052.5 V1064 H780 V1057 H772 V1064 Z" fill="#3b94d9" stroke="none" stroke-width="0" /><rect x="746" y="1076.8" width="61" height="3.2" fill="#76b9ed" stroke="none" stroke-width="0" /><path d="M833,1046 L851,1032.8 L869,1046 V1065.5 H833 Z" fill="#0f6cbd" stroke="none" stroke-width="0" /><path d="M838,1043 H864 V1054 L851,1061 L838,1054 Z" fill="#f2f2f2" stroke="none" stroke-width="0" /><path d="M833,1046 L851,1056.5 L869,1046 V1065.5 H833 Z" fill="#29a8ea" stroke="none" stroke-width="0" /><path d="M833,1065.5 L851,1056.5 L869,1065.5 Z" fill="#50c0f5" stroke="none" stroke-width="0" /><rect x="909.3" y="1032.6" width="33.3" height="31.4" fill="#001e36" stroke="none" stroke-width="0" rx="4"/><text x="912.5" y="1057.5" font-family="Liberation Sans" font-size="19.5" fill="#31a8ff" font-weight="bold" font-style="normal" text-anchor="start">Ps</text><rect x="984" y="1032.6" width="33.5" height="31.4" fill="#00005b" stroke="none" stroke-width="0" rx="4"/><text x="987" y="1057.5" font-family="Liberation Sans" font-size="19.5" fill="#9999ff" font-weight="bold" font-style="normal" text-anchor="start">Pr</text><rect x="1040" y="1076.8" width="73" height="3.2" fill="#76b9ed" stroke="none" stroke-width="0" /><rect x="1065.5" y="1033.6" width="28" height="32.4" fill="#185c37" stroke="none" stroke-width="0" rx="2"/><rect x="1065.5" y="1033.6" width="28" height="10.8" fill="#21a366" stroke="none" stroke-width="0" /><rect x="1079.5" y="1033.6" width="14" height="10.8" fill="#33c481" stroke="none" stroke-width="0" /><rect x="1065.5" y="1044.4" width="28" height="10.8" fill="#107c41" stroke="none" stroke-width="0" /><rect x="1079.5" y="1044.4" width="14" height="10.8" fill="#21a366" stroke="none" stroke-width="0" /><rect x="1058" y="1042.5" width="18.5" height="18.5" fill="#107c41" stroke="none" stroke-width="0" rx="1.5"/><text x="1061.6" y="1057.6" font-family="Liberation Sans" font-size="14" fill="#fff" font-weight="bold" font-style="normal" text-anchor="start">X</text><rect x="1121" y="1076.8" width="49" height="3.2" fill="#76b9ed" stroke="none" stroke-width="0" /><rect x="1170" y="1076.8" width="12" height="3.2" fill="#8ea7b8" stroke="none" stroke-width="0" /><rect x="1140.5" y="1033.6" width="28" height="32.4" fill="#103f91" stroke="none" stroke-width="0" rx="2"/><rect x="1140.5" y="1033.6" width="28" height="10.8" fill="#41a5ee" stroke="none" stroke-width="0" /><rect x="1140.5" y="1044.4" width="28" height="10.8" fill="#2b7cd3" stroke="none" stroke-width="0" /><rect x="1140.5" y="1055.2" width="28" height="10.8" fill="#185abd" stroke="none" stroke-width="0" /><rect x="1132.8" y="1042.5" width="18.5" height="18.5" fill="#185abd" stroke="none" stroke-width="0" rx="1.5"/><text x="1134.6" y="1057.6" font-family="Liberation Sans" font-size="14" fill="#fff" font-weight="bold" font-style="normal" text-anchor="start">W</text><rect x="1196" y="1076.8" width="61" height="3.2" fill="#76b9ed" stroke="none" stroke-width="0" /><path d="M1225.8,1049.5 L1211.08,1041.00 A17,17 0 0 1 1240.52,1041.00 Z" fill="#db4437"/><path d="M1225.8,1049.5 L1240.52,1041.00 A17,17 0 0 1 1225.80,1066.50 Z" fill="#ffcd40"/><path d="M1225.8,1049.5 L1225.80,1066.50 A17,17 0 0 1 1211.08,1041.00 Z" fill="#0f9d58"/><circle cx="1225.8" cy="1049.5" r="8" fill="#fff"/><circle cx="1225.8" cy="1049.5" r="6.3" fill="#4285f4"/><path d="M1627,1053.5 L1636,1044.6 L1645.2,1053.5" fill="none" stroke="#fff" stroke-width="1.4" /><path d="M1672,1059 A8.5,8.5 0 0 1 1680.5,1050.5 M1676,1059 A4.5,4.5 0 0 1 1680.5,1054.5" fill="none" stroke="#fff" stroke-width="1.4" /><path d="M1665,1059 A15.5,15.5 0 0 1 1680.5,1043.5" fill="none" stroke="rgba(255,255,255,0.45)" stroke-width="1.3" /><circle cx="1680.8" cy="1058.5" r="1.4" fill="#fff"/><path d="M1697,1046 H1701 L1706.5,1041 V1059 L1701,1054 H1697 Z" fill="none" stroke="#fff" stroke-width="1.3" /><path d="M1710,1047 A4,4 0 0 1 1710,1053 M1713,1044 A8,8 0 0 1 1713,1056" fill="none" stroke="#fff" stroke-width="1.2" /><path d="M1716,1041.5 A11.5,11.5 0 0 1 1716,1058.5" fill="none" stroke="rgba(255,255,255,0.55)" stroke-width="1.2" /><path d="M1858,1038 H1882 V1056 H1867.5 L1864,1060.5 V1056 H1858 Z" fill="#fff" stroke="none" stroke-width="0" /><line x1="1862" y1="1043" x2="1877" y2="1043" stroke="#333" stroke-width="1.1"/><line x1="1862" y1="1047" x2="1877" y2="1047" stroke="#333" stroke-width="1.1"/><line x1="1862" y1="1051" x2="1873" y2="1051" stroke="#333" stroke-width="1.1"/><circle cx="1881.5" cy="1061.5" r="11" fill="#2b2b2b" stroke="#8a8a8a" stroke-width="1.3"/><text x="1881.5" y="1067.8" font-family="Liberation Sans" font-size="16" fill="#fff" font-weight="bold" font-style="normal" text-anchor="middle">4</text><line x1="1913.5" y1="1020" x2="1913.5" y2="1080" stroke="#8a93a3" stroke-width="1"/></svg>

<div class="t" style="left:28.00px;top:16.00px;font-size:18.8px;color:#fff;font-weight:normal;letter-spacing:-0.360px;">Enregistrement automatique</div>
<div class="t" style="left:564.20px;top:15.00px;font-size:18.5px;color:#fff;font-weight:normal;letter-spacing:-0.550px;">Liste</div>
<div class="t" style="left:608.00px;top:15.00px;font-size:18.5px;color:#fff;font-weight:normal;letter-spacing:0.000px;">-</div>
<div class="t" style="left:623.30px;top:15.00px;font-size:18.5px;color:#fff;font-weight:normal;letter-spacing:-0.567px;">Enregistré</div>
<div class="t" style="left:1451.70px;top:16.00px;font-size:19px;color:#fff;font-weight:normal;letter-spacing:-1.155px;">Thomas DUVAL</div>
<div class="t" style="left:18.80px;top:64.00px;font-size:20px;color:#424242;font-weight:normal;letter-spacing:-0.350px;">Fichier</div>
<div class="t" style="left:117.70px;top:64.00px;font-size:20px;color:#2b2b2b;font-weight:normal;letter-spacing:-0.050px;-webkit-text-stroke:0.7px #2b2b2b;">Accueil</div>
<div class="t" style="left:221.50px;top:64.00px;font-size:20px;color:#424242;font-weight:normal;letter-spacing:0.125px;">Insertion</div>
<div class="t" style="left:342.40px;top:64.00px;font-size:20px;color:#424242;font-weight:normal;letter-spacing:-0.127px;">Mise en page</div>
<div class="t" style="left:503.50px;top:64.00px;font-size:20px;color:#424242;font-weight:normal;letter-spacing:-0.214px;">Formules</div>
<div class="t" style="left:626.60px;top:64.00px;font-size:20px;color:#424242;font-weight:normal;letter-spacing:0.000px;">Do</div>
<div class="t" style="left:1617.00px;top:64.00px;font-size:20px;color:#217346;font-weight:normal;letter-spacing:0.000px;-webkit-text-stroke:0.7px #217346;">Partager</div>
<div class="t" style="left:1755.70px;top:64.00px;font-size:20px;color:#217346;font-weight:normal;letter-spacing:0.200px;-webkit-text-stroke:0.7px #217346;">Commentaires</div>
<div class="t" style="left:19.70px;top:160.00px;font-size:18.3px;color:#444;font-weight:normal;letter-spacing:-0.580px;">Coller</div>
<div class="t" style="left:6.80px;top:220.00px;font-size:15.3px;color:#444;font-weight:normal;letter-spacing:-0.115px;">Presse-papiers</div>
<div class="t" style="left:274.00px;top:220.00px;font-size:15.3px;color:#444;font-weight:normal;letter-spacing:0.000px;">Police</div>
<div class="t" style="left:552.30px;top:220.00px;font-size:15.3px;color:#444;font-weight:normal;letter-spacing:0.300px;">Alignement</div>
<div class="t" style="left:1257.00px;top:220.00px;font-size:15.3px;color:#444;font-weight:normal;letter-spacing:0.000px;">Cellules</div>
<div class="t" style="left:1412.00px;top:220.00px;font-size:15.3px;color:#444;font-weight:normal;letter-spacing:0.433px;">Édition</div>
<div class="t" style="left:1541.00px;top:220.00px;font-size:15.3px;color:#444;font-weight:normal;letter-spacing:-0.033px;">Analyse</div>
<div class="t" style="left:1662.00px;top:220.00px;font-size:15.3px;color:#444;font-weight:normal;letter-spacing:0.357px;">Confidentialité</div>
<div class="t" style="left:156.50px;top:124.00px;font-size:19.2px;color:#222;font-weight:normal;letter-spacing:-0.667px;">Calibri</div>
<div class="t" style="left:334.00px;top:124.00px;font-size:19.2px;color:#222;font-weight:normal;letter-spacing:0.000px;">11</div>
<div class="t" style="left:1242.00px;top:108.00px;font-size:19.4px;color:#333;font-weight:normal;letter-spacing:-0.883px;">Insérer</div>
<div class="t" style="left:1243.50px;top:142.00px;font-size:19.4px;color:#333;font-weight:normal;letter-spacing:-0.688px;">Supprimer</div>
<div class="t" style="left:1242.50px;top:176.00px;font-size:19.4px;color:#333;font-weight:normal;letter-spacing:-0.560px;">Format</div>
<div class="t" style="left:1031.50px;top:108.00px;font-size:19.4px;color:#333;font-weight:normal;letter-spacing:-0.587px;">e conditionnelle</div>
<div class="t" style="left:926.00px;top:144.00px;font-size:19.4px;color:#333;font-weight:normal;letter-spacing:-0.444px;">Mettre sous forme de tableau</div>
<div class="t" style="left:1518.70px;top:158.00px;font-size:19px;color:#333;font-weight:normal;letter-spacing:-0.882px;">Analyser des</div>
<div class="t" style="left:1534.60px;top:182.00px;font-size:19px;color:#333;font-weight:normal;letter-spacing:-0.933px;">données</div>
<div class="t" style="left:1674.40px;top:158.00px;font-size:19px;color:#a6a6a6;font-weight:normal;letter-spacing:-0.675px;">Niveau de</div>
<div class="t" style="left:1649.00px;top:182.00px;font-size:19px;color:#a6a6a6;font-weight:normal;letter-spacing:-0.243px;">confidentialité</div>
<div class="t" style="left:13.00px;top:263.00px;font-size:20px;color:#222;font-weight:normal;letter-spacing:-1.800px;">E7</div>
<div class="t" style="left:388.40px;top:262.00px;font-size:20px;color:#222;font-weight:normal;letter-spacing:-0.087px;">677655675</div>
<div class="t" style="left:93.00px;top:311.00px;font-size:20px;color:#222;font-weight:normal;letter-spacing:0.000px;">A</div>
<div class="t" style="left:212.50px;top:311.00px;font-size:20px;color:#222;font-weight:normal;letter-spacing:0.000px;">B</div>
<div class="t" style="left:332.00px;top:311.00px;font-size:20px;color:#222;font-weight:normal;letter-spacing:0.000px;">C</div>
<div class="t" style="left:451.50px;top:311.00px;font-size:20px;color:#222;font-weight:normal;letter-spacing:0.000px;">D</div>
<div class="t" style="left:633.50px;top:311.00px;font-size:20px;color:#217346;font-weight:normal;letter-spacing:0.000px;">E</div>
<div class="t" style="left:1297.50px;top:311.00px;font-size:20px;color:#222;font-weight:normal;letter-spacing:0.000px;">J</div>
<div class="t" style="left:1414.50px;top:311.00px;font-size:20px;color:#222;font-weight:normal;letter-spacing:0.000px;">K</div>
<div class="t" style="left:1535.50px;top:311.00px;font-size:20px;color:#222;font-weight:normal;letter-spacing:0.000px;">L</div>
<div class="t" style="left:1653.50px;top:311.00px;font-size:20px;color:#222;font-weight:normal;letter-spacing:0.000px;">M</div>
<div class="t" style="left:1774.50px;top:311.00px;font-size:20px;color:#222;font-weight:normal;letter-spacing:0.000px;">N</div>
<div class="t" style="left:14.50px;top:340.00px;font-size:19.5px;color:#222;font-weight:normal;letter-spacing:0.000px;">1</div>
<div class="t" style="left:14.50px;top:368.00px;font-size:19.5px;color:#222;font-weight:normal;letter-spacing:0.000px;">2</div>
<div class="t" style="left:14.50px;top:398.00px;font-size:19.5px;color:#222;font-weight:normal;letter-spacing:0.000px;">3</div>
<div class="t" style="left:14.50px;top:426.00px;font-size:19.5px;color:#222;font-weight:normal;letter-spacing:0.000px;">4</div>
<div class="t" style="left:14.50px;top:456.00px;font-size:19.5px;color:#222;font-weight:normal;letter-spacing:0.000px;">5</div>
<div class="t" style="left:14.50px;top:484.00px;font-size:19.5px;color:#222;font-weight:normal;letter-spacing:0.000px;">6</div>
<div class="t" style="left:14.50px;top:514.00px;font-size:19.5px;color:#217346;font-weight:normal;letter-spacing:0.000px;">7</div>
<div class="t" style="left:14.50px;top:542.00px;font-size:19.5px;color:#217346;font-weight:normal;letter-spacing:0.000px;">8</div>
<div class="t" style="left:14.50px;top:572.00px;font-size:19.5px;color:#217346;font-weight:normal;letter-spacing:0.000px;">9</div>
<div class="t" style="left:9.00px;top:600.00px;font-size:19.5px;color:#217346;font-weight:normal;letter-spacing:0.000px;">10</div>
<div class="t" style="left:9.50px;top:630.00px;font-size:19.5px;color:#217346;font-weight:normal;letter-spacing:0.000px;">11</div>
<div class="t" style="left:9.00px;top:658.00px;font-size:19.5px;color:#217346;font-weight:normal;letter-spacing:0.000px;">12</div>
<div class="t" style="left:9.00px;top:688.00px;font-size:19.5px;color:#217346;font-weight:normal;letter-spacing:0.000px;">13</div>
<div class="t" style="left:9.00px;top:716.00px;font-size:19.5px;color:#217346;font-weight:normal;letter-spacing:0.000px;">14</div>
<div class="t" style="left:9.00px;top:746.00px;font-size:19.5px;color:#217346;font-weight:normal;letter-spacing:0.000px;">15</div>
<div class="t" style="left:9.00px;top:774.00px;font-size:19.5px;color:#217346;font-weight:normal;letter-spacing:0.000px;">16</div>
<div class="t" style="left:9.00px;top:804.00px;font-size:19.5px;color:#217346;font-weight:normal;letter-spacing:0.000px;">17</div>
<div class="t" style="left:9.00px;top:832.00px;font-size:19.5px;color:#217346;font-weight:normal;letter-spacing:0.000px;">18</div>
<div class="t" style="left:9.00px;top:862.00px;font-size:19.5px;color:#222;font-weight:normal;letter-spacing:0.000px;">19</div>
<div class="t" style="left:9.00px;top:890.00px;font-size:19.5px;color:#222;font-weight:normal;letter-spacing:0.000px;">20</div>
<div class="t" style="left:9.00px;top:920.00px;font-size:19.5px;color:#222;font-weight:normal;letter-spacing:0.000px;">21</div>
<div class="t" style="left:522.90px;top:485.00px;font-size:19.5px;color:#111;font-weight:bold;letter-spacing:0.000px;">Numéros de téléphone</div>
<div class="t" style="left:592.00px;top:512.00px;font-size:20px;color:#111;font-weight:normal;letter-spacing:0.000px;">677655675</div>
<div class="t" style="left:592.00px;top:541.00px;font-size:20px;color:#111;font-weight:normal;letter-spacing:0.000px;">763459876</div>
<div class="t" style="left:592.00px;top:570.00px;font-size:20px;color:#111;font-weight:normal;letter-spacing:0.000px;">622732345</div>
<div class="t" style="left:592.00px;top:599.00px;font-size:20px;color:#111;font-weight:normal;letter-spacing:0.000px;">677655675</div>
<div class="t" style="left:592.00px;top:628.00px;font-size:20px;color:#111;font-weight:normal;letter-spacing:0.000px;">763459876</div>
<div class="t" style="left:592.00px;top:657.00px;font-size:20px;color:#111;font-weight:normal;letter-spacing:0.000px;">622732345</div>
<div class="t" style="left:592.00px;top:686.00px;font-size:20px;color:#111;font-weight:normal;letter-spacing:0.000px;">677655675</div>
<div class="t" style="left:592.00px;top:715.00px;font-size:20px;color:#111;font-weight:normal;letter-spacing:0.000px;">763459876</div>
<div class="t" style="left:592.00px;top:744.00px;font-size:20px;color:#111;font-weight:normal;letter-spacing:0.000px;">622732345</div>
<div class="t" style="left:592.00px;top:773.00px;font-size:20px;color:#111;font-weight:normal;letter-spacing:0.000px;">677655675</div>
<div class="t" style="left:592.00px;top:802.00px;font-size:20px;color:#111;font-weight:normal;letter-spacing:0.000px;">763459876</div>
<div class="t" style="left:592.00px;top:831.00px;font-size:20px;color:#111;font-weight:normal;letter-spacing:0.000px;">622732345</div>
<div class="t" style="left:130.30px;top:958.00px;font-size:20.5px;color:#444;font-weight:normal;letter-spacing:-0.620px;">Feuil1</div>
<div class="t" style="left:211.00px;top:958.00px;font-size:20.5px;color:#444;font-weight:normal;letter-spacing:-0.400px;">Feuil2</div>
<div class="t" style="left:291.00px;top:958.00px;font-size:20.5px;color:#217346;font-weight:normal;letter-spacing:0.360px;-webkit-text-stroke:0.7px #217346;">Feuil5</div>
<div class="t" style="left:373.40px;top:958.00px;font-size:20.5px;color:#444;font-weight:normal;letter-spacing:-0.620px;">Feuil4</div>
<div class="t" style="left:454.50px;top:958.00px;font-size:20.5px;color:#444;font-weight:normal;letter-spacing:-0.500px;">Feuil3</div>
<div class="t" style="left:10.30px;top:997.00px;font-size:16px;color:#444;font-weight:normal;letter-spacing:-0.267px;">Prêt</div>
<div class="t" style="left:428.70px;top:997.00px;font-size:16px;color:#444;font-weight:normal;letter-spacing:-0.160px;">Moyenne : 687949229,8</div>
<div class="t" style="left:619.80px;top:997.00px;font-size:16px;color:#444;font-weight:normal;letter-spacing:0.000px;">Nb (</div>
<div class="t" style="left:1207.00px;top:996.00px;font-size:16px;color:#444;font-weight:normal;letter-spacing:-0.191px;">compléments... Merci de patienter.</div>
<div class="t" style="left:1865.00px;top:996.00px;font-size:16px;color:#444;font-weight:normal;letter-spacing:-0.250px;">100 %</div>
<div class="t" style="left:133.00px;top:1042.00px;font-size:22.5px;color:#222;font-weight:normal;letter-spacing:0.083px;">Taper ici pour rechercher</div>
<div class="t" style="left:1762.00px;top:1029.00px;font-size:17.3px;color:#fff;font-weight:normal;letter-spacing:-0.125px;">12:48</div>
<div class="t" style="left:1735.70px;top:1056.00px;font-size:17.5px;color:#fff;font-weight:normal;letter-spacing:0.589px;">05/05/2021</div>

<!-- CONTEXT MENU -->
<div class="a" style="left:650px;top:152px;width:559px;height:864px;background:#fff;border:1px solid #d4d4d4;box-shadow:1px 1px 3px rgba(0,0,0,.16)"></div>
<div class="a" style="left:698px;top:381px;width:509px;height:1px;background:#e1e1e1"></div>
<div class="a" style="left:698px;top:428px;width:509px;height:1px;background:#e1e1e1"></div>
<div class="a" style="left:698px;top:563px;width:509px;height:1px;background:#e1e1e1"></div>
<div class="a" style="left:698px;top:698px;width:509px;height:1px;background:#e1e1e1"></div>
<div class="a" style="left:698px;top:745px;width:509px;height:1px;background:#e1e1e1"></div>
<div class="a" style="left:698px;top:836px;width:509px;height:1px;background:#e1e1e1"></div>
<div class="a" style="left:652px;top:838px;width:555px;height:44px;background:#cfcfcf"></div>
<div class="a" style="left:1173px;top:981px;width:1px;height:24px;background:#e1e1e1"></div>
<div class="t" style="left:706.50px;top:168.00px;font-size:18.8px;color:#262626;font-weight:normal;letter-spacing:-0.550px;">Cou<u>p</u>er</div>
<div class="t" style="left:706.50px;top:212.00px;font-size:18.8px;color:#262626;font-weight:normal;letter-spacing:-0.550px;"><u>C</u>opier</div>
<div class="t" style="left:707.75px;top:258.00px;font-size:18.8px;color:#111;font-weight:bold;letter-spacing:-0.500px;">Options de collage :</div>
<div class="t" style="left:706.70px;top:350.00px;font-size:18.8px;color:#262626;font-weight:normal;letter-spacing:-0.747px;">Collage <u>s</u>pécial...</div>
<div class="t" style="left:706.70px;top:397.00px;font-size:18.8px;color:#262626;font-weight:normal;letter-spacing:-0.686px;">Recherche inte<u>l</u>ligente</div>
<div class="t" style="left:705.70px;top:444.00px;font-size:18.8px;color:#262626;font-weight:normal;letter-spacing:-0.633px;"><u>I</u>nsérer...</div>
<div class="t" style="left:706.00px;top:488.00px;font-size:18.8px;color:#262626;font-weight:normal;letter-spacing:-0.400px;"><u>S</u>upprimer...</div>
<div class="t" style="left:706.00px;top:532.00px;font-size:18.8px;color:#262626;font-weight:normal;letter-spacing:-0.571px;">E<u>f</u>facer le contenu</div>
<div class="t" style="left:707.00px;top:578.00px;font-size:18.8px;color:#262626;font-weight:normal;letter-spacing:-0.654px;">Anal<u>y</u>se rapide</div>
<div class="t" style="left:706.00px;top:623.00px;font-size:18.8px;color:#262626;font-weight:normal;letter-spacing:-0.583px;">Filtr<u>e</u>r</div>
<div class="t" style="left:707.00px;top:667.00px;font-size:18.8px;color:#262626;font-weight:normal;letter-spacing:-1.000px;"><u>T</u>rier</div>
<div class="t" style="left:706.00px;top:714.00px;font-size:18.8px;color:#262626;font-weight:normal;letter-spacing:-0.362px;"><u>O</u>btenir des données à partir d’un tableau ou d’une plage...</div>
<div class="t" style="left:706.00px;top:761.00px;font-size:18.8px;color:#262626;font-weight:normal;letter-spacing:-0.389px;">Nouveau co<u>m</u>mentaire</div>
<div class="t" style="left:706.00px;top:805.00px;font-size:18.8px;color:#262626;font-weight:normal;letter-spacing:-0.292px;"><u>N</u>ouvelle note</div>
<div class="t" style="left:706.00px;top:852.00px;font-size:18.8px;color:#262626;font-weight:normal;letter-spacing:-0.438px;">Form<u>a</u>t de cellule</div>
<div class="t" style="left:706.00px;top:896.00px;font-size:18.8px;color:#262626;font-weight:normal;letter-spacing:-0.519px;">Liste dér<u>o</u>ulante de choix...</div>
<div class="t" style="left:706.00px;top:940.00px;font-size:18.8px;color:#262626;font-weight:normal;letter-spacing:-0.294px;"><u>D</u>éfinir un nom...</div>
<div class="t" style="left:706.00px;top:984.00px;font-size:18.8px;color:#262626;font-weight:normal;letter-spacing:-0.867px;">L<u>i</u>en</div>
<svg style="left:0;top:0" width="1920" height="1080" viewBox="0 0 1920 1080"><line x1="676.0" y1="163" x2="685.5" y2="181.0" stroke="#444" stroke-width="1.2"/><line x1="688.0" y1="163" x2="678.5" y2="181.0" stroke="#444" stroke-width="1.2"/><circle cx="677.2" cy="183.5" r="2.6" fill="#fff" stroke="#2b88d8" stroke-width="1.7"/><circle cx="686.8" cy="183.5" r="2.6" fill="#fff" stroke="#2b88d8" stroke-width="1.7"/><path d="M677.3,226.0 H670.9 V207.6 H680.3 L683.3,210.5" fill="none" stroke="#444" stroke-width="1.3" /><path d="M679.3,213.5 H687.8 L693.6999999999999,219.5 V230.4 H679.3 Z" fill="#fff" stroke="#444" stroke-width="1.3" /><path d="M687.8,213.5 V219.5 H693.6999999999999" fill="none" stroke="#444" stroke-width="1.1" /><line x1="682.3" y1="223.0" x2="689.3" y2="223.0" stroke="#444" stroke-width="1.1"/><line x1="682.3" y1="226.0" x2="689.3" y2="226.0" stroke="#444" stroke-width="1.1"/><rect x="673.8" y="251.88" width="13.33" height="20.64" fill="#fdf3dc" stroke="#e67e22" stroke-width="1.4" /><path d="M676.44,254.28 V251.16 H678.805 A1.9349999999999998,1.9349999999999998 0 0 1 682.675,251.16 H684.825 V254.28 Z" fill="#fff" stroke="#6b6b6b" stroke-width="1.3" /><rect x="684.18" y="258.6" width="9.89" height="13.919999999999998" fill="#fafafa" stroke="#444" stroke-width="1.5" /><rect x="710.3" y="297.14" width="19.22" height="29.669999999999998" fill="#fdf3dc" stroke="#e67e22" stroke-width="1.6" /><path d="M714.46,300.59 V296.105 H717.87 A2.79,2.79 0 0 1 723.45,296.105 H726.55 V300.59 Z" fill="#fff" stroke="#6b6b6b" stroke-width="1.3" /><rect x="725.62" y="306.8" width="14.26" height="20.009999999999998" fill="#fafafa" stroke="#444" stroke-width="1.5" /><circle cx="685.6" cy="400" r="7.6" fill="none" stroke="#1f87d6" stroke-width="1.6"/><line x1="680.2" y1="405.5" x2="671.5" y2="414.5" stroke="#1f87d6" stroke-width="1.8"/><rect x="685" y="399" width="1.8" height="4.8" fill="#222" stroke="none" stroke-width="0" /><rect x="685" y="396.2" width="1.8" height="1.8" fill="#222" stroke="none" stroke-width="0" /><path d="M682,576 H693 V595.5 H671 V583.5" fill="none" stroke="#444" stroke-width="1.5" /><line x1="683" y1="579.5" x2="692" y2="579.5" stroke="#444" stroke-width="1.4"/><rect x="675.5" y="586.5" width="13.5" height="5" fill="none" stroke="#444" stroke-width="1.3" /><line x1="682" y1="581" x2="682" y2="586" stroke="#777" stroke-width="1"/><path d="M676,574 H681 L677.5,579.5 H680 L671,588.5 L674,581 H671.5 Z" fill="#e87a10" stroke="none" stroke-width="0" /><rect x="670.8" y="709.6" width="21.2" height="20.8" fill="#fff" stroke="#333" stroke-width="1.5" /><line x1="670.8" y1="716.8" x2="692" y2="716.8" stroke="#333" stroke-width="1.3"/><line x1="670.8" y1="722" x2="692" y2="722" stroke="#333" stroke-width="1.1"/><line x1="670.8" y1="726" x2="692" y2="726" stroke="#333" stroke-width="1.1"/><line x1="681.4" y1="716.8" x2="681.4" y2="730" stroke="#333" stroke-width="1.1"/><polygon points="673.5,712 678,712 675.75,714.5" fill="#2b88d8"/><polygon points="684,712 688.5,712 686.25,714.5" fill="#2b88d8"/><text x="670" y="768" font-family="Liberation Sans" font-size="13" fill="#2b88d8" font-weight="normal" font-style="normal" text-anchor="start">@</text><path d="M684,757.8 H692 V772 H679 L675,777.5 V772 H672.5 V770" fill="none" stroke="#444" stroke-width="1.4" /><path d="M681,801.5 H692 V816 L686,822 H671.5 V808" fill="none" stroke="#444" stroke-width="1.4" /><path d="M686,822 V816 H692" fill="none" stroke="#444" stroke-width="1.2" /><line x1="670.5" y1="806" x2="680" y2="806" stroke="#2ea043" stroke-width="1.6"/><line x1="675.2" y1="801" x2="675.2" y2="810.5" stroke="#2ea043" stroke-width="1.6"/><rect x="673.5" y="847.5" width="17" height="23.5" fill="none" stroke="#444" stroke-width="1.4" /><rect x="677" y="853.5" width="3.2" height="3.2" fill="none" stroke="#555" stroke-width="1" /><line x1="682" y1="855" x2="686" y2="855" stroke="#555" stroke-width="1"/><rect x="677" y="860" width="3.2" height="3.2" fill="none" stroke="#555" stroke-width="1" /><line x1="682" y1="861.5" x2="686" y2="861.5" stroke="#555" stroke-width="1"/><path d="M681,994.3 H676 A4.8,4.8 0 0 1 676,984.7 H681 A4.8,4.8 0 0 1 685.5,988" fill="none" stroke="#444" stroke-width="1.5" /><path d="M683,989.2 H688.5 A4.8,4.8 0 0 1 688.5,998.8 H683 A4.8,4.8 0 0 1 678.5,995.5" fill="none" stroke="#444" stroke-width="1.5" /><path d="M1186.5,623 L1193,630 L1186.5,637" fill="none" stroke="#444" stroke-width="1.4" /><path d="M1186.5,667 L1193,674 L1186.5,681" fill="none" stroke="#444" stroke-width="1.4" /><path d="M1186.5,985 L1193,992 L1186.5,999" fill="none" stroke="#444" stroke-width="1.4" /></svg>

<!-- MINI TOOLBAR -->
<div class="a" style="left:650px;top:47px;width:382px;height:82px;background:#fff;border:1px solid #d6d6d6;box-shadow:1px 1px 3px rgba(0,0,0,.15)"></div>
<div class="a" style="left:655px;top:52px;width:90px;height:36px;background:#fff;border:1px solid #c8c6c4"></div>
<div class="a" style="left:745px;top:52px;width:68px;height:36px;background:#fff;border:1px solid #c8c6c4"></div>
<div class="a" style="left:719px;top:88px;width:32px;height:35px;background:#c6c6c6"></div>
<div class="t" style="left:835.30px;top:17.00px;font-size:18.5px;color:#1d5e38;font-weight:normal;letter-spacing:-1.256px;">Rechercher</div>
<div class="t" style="left:657.50px;top:61.00px;font-size:18.7px;color:#222;font-weight:normal;letter-spacing:-0.500px;">Calibri</div>
<div class="t" style="left:749.20px;top:61.00px;font-size:18.7px;color:#222;font-weight:normal;letter-spacing:0.000px;">11</div>
<div class="t" style="left:967.50px;top:62.00px;font-size:14px;color:#333;font-weight:normal;letter-spacing:-0.350px;">000</div>
<svg style="left:0;top:0" width="1920" height="1080" viewBox="0 0 1920 1080"><polyline points="732,67.5 736.2,73 740.4,67.5" fill="none" stroke="#333" stroke-width="1.5"/><polyline points="800,67.5 804.25,73 808.5,67.5" fill="none" stroke="#333" stroke-width="1.5"/><path d="M820,77.5 L827.75,59 L835.5,77.5" fill="none" stroke="#333" stroke-width="1.6" stroke-linejoin="miter"/><line x1="822.635" y1="71.21000000000001" x2="832.865" y2="71.21000000000001" stroke="#333" stroke-width="1.6"/><polyline points="834.5,63.5 837.5,60 840.5,63.5" fill="none" stroke="#2b88d8" stroke-width="1.4"/><path d="M853.8,77.5 L860.15,63.5 L866.5,77.5" fill="none" stroke="#333" stroke-width="1.5" stroke-linejoin="miter"/><line x1="855.959" y1="72.74" x2="864.341" y2="72.74" stroke="#333" stroke-width="1.5"/><polyline points="866.5,60 869.5,63.5 872.5,60" fill="none" stroke="#2b88d8" stroke-width="1.4"/><rect x="881" y="64" width="22.5" height="15" fill="none" stroke="#444" stroke-width="1.5" /><text x="884" y="76" font-family="Liberation Sans" font-size="10" fill="#444" font-weight="bold" font-style="normal" text-anchor="start">Cca</text><ellipse cx="900" cy="72.5" rx="5.5" ry="2" fill="#fff" stroke="#e07a10" stroke-width="1.3"/><path d="M894.5,72.5 V80 A5.5,2 0 0 0 905.5,80 V72.5" fill="#fff" stroke="#e07a10" stroke-width="1.3" /><path d="M894.5,76.3 A5.5,2 0 0 0 905.5,76.3" fill="none" stroke="#e07a10" stroke-width="1.1" /><polyline points="915.4,67.5 919.2,73 923,67.5" fill="none" stroke="#333" stroke-width="1.5"/><text x="934.5" y="80" font-family="Liberation Sans" font-size="24" fill="#444" font-weight="normal" font-style="normal" text-anchor="start">%</text><rect x="999.5" y="58.2" width="22" height="21.5" fill="none" stroke="#444" stroke-width="1.5" /><rect x="999.5" y="62" width="22" height="14" fill="#fff" stroke="#2b88d8" stroke-width="1.5" /><path d="M1003,69 H1018 M1006,66 L1003,69 L1006,72 M1015,66 L1018,69 L1015,72" fill="none" stroke="#2b88d8" stroke-width="1.4" /><text x="663" y="111" font-family="Liberation Sans" font-size="19.5" fill="#333" font-weight="bold" font-style="normal" text-anchor="start">G</text><text x="695.5" y="111" font-family="Liberation Serif" font-size="20" fill="#333" font-weight="normal" font-style="italic" text-anchor="start">I</text><line x1="725.2" y1="95.5" x2="745.0" y2="95.5" stroke="#333" stroke-width="1.6"/><line x1="728.6" y1="101.7" x2="741.6" y2="101.7" stroke="#333" stroke-width="1.6"/><line x1="725.2" y1="107.9" x2="745.0" y2="107.9" stroke="#333" stroke-width="1.6"/><line x1="728.6" y1="114.1" x2="741.6" y2="114.1" stroke="#333" stroke-width="1.6"/><path d="M764.0,96.0 L756.0,104.80000000000001 L762.9,111.30000000000001 L771.3,103.0" fill="none" stroke="#333" stroke-width="1.4" /><path d="M764.0,96.0 Q765.8,93.0 767.3,96.5 V103.5" fill="none" stroke="#333" stroke-width="1.3" /><path d="M769.3,100.69999999999999 Q775.0,99.5 774.5,108.0 Q774.0,111.5 772.7,112.0 Q773.0,105.5 769.0,103.30000000000001 Z" fill="#1f6fb8" stroke="none" stroke-width="0" /><rect x="755.4" y="112" width="22.9" height="5.5" fill="#ffc000" stroke="none" stroke-width="0" /><polyline points="789.8,105 793.4,110 797,105" fill="none" stroke="#333" stroke-width="1.5"/><path d="M814,110.5 L821.0,95 L828,110.5" fill="none" stroke="#333" stroke-width="1.5" stroke-linejoin="miter"/><line x1="816.38" y1="105.23" x2="825.62" y2="105.23" stroke="#333" stroke-width="1.5"/><rect x="809.6" y="112" width="22.9" height="5.5" fill="#ff0000" stroke="none" stroke-width="0" /><polyline points="844,105 847.5,110 851,105" fill="none" stroke="#333" stroke-width="1.5"/><rect x="863" y="95" width="22.8" height="19.5" fill="none" stroke="#555" stroke-width="1.2" stroke-dasharray="1.5 1.5"/><path d="M874.4,95 V114 M863,104.7 H885.8" fill="none" stroke="#555" stroke-width="1.1" stroke-dasharray="1.5 1.5"/><line x1="862.7" y1="115.5" x2="886.3" y2="115.5" stroke="#222" stroke-width="1.8"/><polyline points="897,105 901.0,110 905,105" fill="none" stroke="#333" stroke-width="1.5"/><text x="933" y="106" font-family="Liberation Sans" font-size="13" fill="#444" font-weight="normal" font-style="normal" text-anchor="start">0</text><text x="928" y="118" font-family="Liberation Sans" font-size="13" fill="#444" font-weight="normal" font-style="normal" text-anchor="start">,00</text><line x1="917.5" y1="100" x2="930" y2="100" stroke="#2b88d8" stroke-width="1.5"/><path d="M921.5,96 L917.5,100 L921.5,104" fill="none" stroke="#2b88d8" stroke-width="1.5" /><text x="952" y="106" font-family="Liberation Sans" font-size="13" fill="#444" font-weight="normal" font-style="normal" text-anchor="start">,00</text><text x="960" y="118" font-family="Liberation Sans" font-size="13" fill="#444" font-weight="normal" font-style="normal" text-anchor="start">,0</text><line x1="949" y1="111.5" x2="961" y2="111.5" stroke="#2b88d8" stroke-width="1.5"/><path d="M957,107.5 L961,111.5 L957,115.5" fill="none" stroke="#2b88d8" stroke-width="1.5" /><path d="M982.3,105.8 L991.5,116.1 L998.5,109.3 L991.0,102.3 Z" fill="#fce3c6" stroke="#e67e22" stroke-width="1.7" /><line x1="986.0" y1="107.3" x2="994.0" y2="114.3" stroke="#fff" stroke-width="1.2"/><path d="M991.0,102.3 L994.5,98.8 L1002.0,105.8 L998.5,109.3 Z" fill="#fff" stroke="#3c3c3c" stroke-width="1.5" /><path d="M997.5,102.1 L1002.0,97.6 A1.9,1.9 0 0 1 1004.7,100.3 L1000.2,104.8" fill="#fff" stroke="#3c3c3c" stroke-width="1.5" /></svg>

</body></html>
